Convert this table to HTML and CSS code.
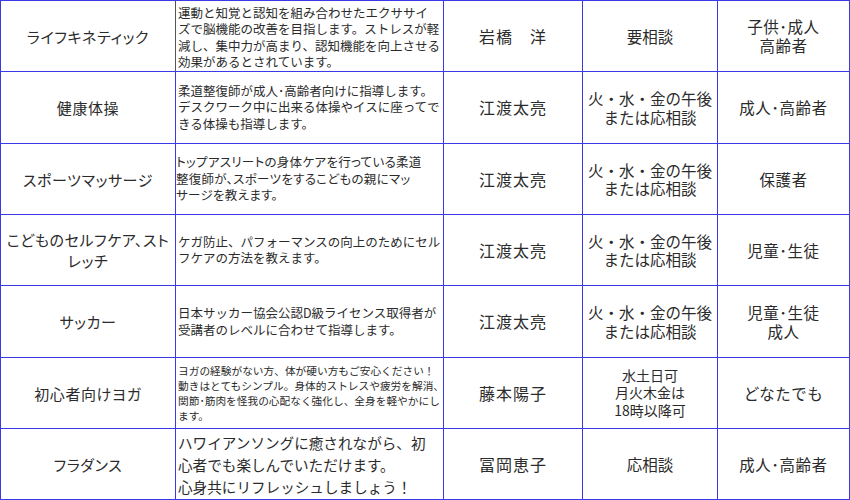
FILE: index.html
```html
<!DOCTYPE html>
<html lang="ja">
<head>
<meta charset="utf-8">
<title>教室一覧</title>
<link rel="stylesheet" href="styles.css">
</head>
<body>
<div class="schedule">
  <div class="cell name name-first">ライフキネティック</div>
  <div class="cell desc desc-first">運動と知覚と認知を組み合わせたエクササイ<br>ズで脳機能の改善を目指します。ストレスが軽<br>減し、集中力が高まり、認知機能を向上させる<br>効果があるとされています。</div>
  <div class="cell teacher">岩橋　洋</div>
  <div class="cell time">要相談</div>
  <div class="cell target">子供･成人<br>高齢者</div>

  <div class="cell name">健康体操</div>
  <div class="cell desc">柔道整復師が成人･高齢者向けに指導します。<br>デスクワーク中に出来る体操やイスに座ってで<br>きる体操も指導します。</div>
  <div class="cell teacher">江渡太亮</div>
  <div class="cell time">火・水・金の午後<br>または応相談</div>
  <div class="cell target">成人･高齢者</div>

  <div class="cell name">スポーツマッサージ</div>
  <div class="cell desc desc-tight">トップアスリートの身体ケアを行っている柔道<br>整復師が、スポーツをするこどもの親にマッ<br>サージを教えます。</div>
  <div class="cell teacher">江渡太亮</div>
  <div class="cell time">火・水・金の午後<br>または応相談</div>
  <div class="cell target">保護者</div>

  <div class="cell name">こどものセルフケア、スト<br>レッチ</div>
  <div class="cell desc">ケガ防止、パフォーマンスの向上のためにセル<br>フケアの方法を教えます。</div>
  <div class="cell teacher">江渡太亮</div>
  <div class="cell time">火・水・金の午後<br>または応相談</div>
  <div class="cell target">児童･生徒</div>

  <div class="cell name">サッカー</div>
  <div class="cell desc">日本サッカー協会公認D級ライセンス取得者が<br>受講者のレベルに合わせて指導します。</div>
  <div class="cell teacher">江渡太亮</div>
  <div class="cell time">火・水・金の午後<br>または応相談</div>
  <div class="cell target">児童･生徒<br>成人</div>

  <div class="cell name">初心者向けヨガ</div>
  <div class="cell desc desc-small">ヨガの経験がない方、体が硬い方もご安心ください！<br>動きはとてもシンプル。身体的ストレスや疲労を解消、<br>関節･筋肉を怪我の心配なく強化し、全身を軽やかにし<br>ます。</div>
  <div class="cell teacher">藤本陽子</div>
  <div class="cell time time-small">水土日可<br>月火木金は<br>18時以降可</div>
  <div class="cell target">どなたでも</div>

  <div class="cell name">フラダンス</div>
  <div class="cell desc desc-large">ハワイアンソングに癒されながら、初<br>心者でも楽しんでいただけます。<br>心身共にリフレッシュしましょう！</div>
  <div class="cell teacher">冨岡恵子</div>
  <div class="cell time">応相談</div>
  <div class="cell target">成人･高齢者</div>
</div>
</body>
</html>
```

FILE: styles.css
```css
html, body {
  margin: 0;
  padding: 0;
  background: #ffffff;
}

body {
  font-family: "Noto Sans CJK JP", "Noto Sans", sans-serif;
  color: #2b2b2b;
}

.schedule {
  display: grid;
  grid-template-columns: 175px 268px 139px 135px 132px;
  grid-template-rows: 71px 72px 71px 71px 72px 71px 71px;
  border-top: 1px solid #3a3ae8;
  border-left: 1px solid #3a3ae8;
  width: 849px;
}

.cell {
  box-sizing: border-box;
  border-right: 1px solid #3a3ae8;
  border-bottom: 1px solid #3a3ae8;
  display: flex;
  align-items: center;
  justify-content: center;
  text-align: center;
  white-space: nowrap;
  overflow: hidden;
}

.name {
  font-size: 15px;
  line-height: 21px;
  font-feature-settings: "palt";
  letter-spacing: 0.6px;
}

.name-first {
  border-right-color: #555555;
}

.desc {
  justify-content: flex-start;
  text-align: left;
  padding-left: 2px;
  font-size: 12.5px;
  line-height: 16.5px;
}

.desc-first {
  padding-top: 3px;
}

.desc-tight {
  padding-left: 0;
  font-feature-settings: "palt";
  letter-spacing: 0.3px;
}

.desc-small {
  font-size: 10.7px;
  line-height: 15px;
}

.desc-large {
  font-size: 14.6px;
  line-height: 22px;
  padding-top: 2px;
}

.teacher {
  font-size: 16px;
  letter-spacing: 1px;
  line-height: 19px;
}

.time {
  font-size: 15.5px;
  line-height: 18.5px;
}

.time-small {
  font-size: 14px;
  line-height: 17.5px;
}

.target {
  font-size: 15.5px;
  letter-spacing: 0.5px;
  line-height: 19px;
}
```
